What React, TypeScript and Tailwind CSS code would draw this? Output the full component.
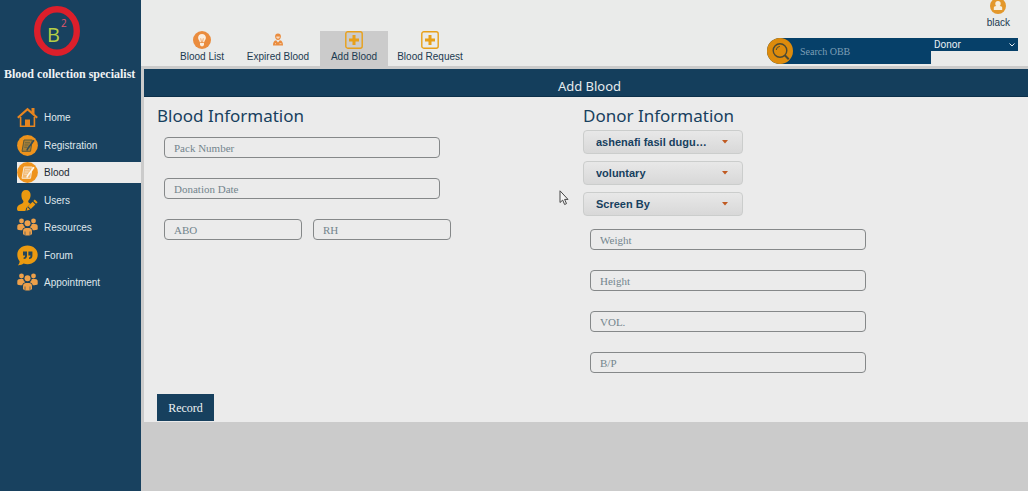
import React from "react";

type IconProps = { className?: string };

const HomeIcon = () => (
  <svg viewBox="0 0 21 21" className="size-[21px]" fill="none" stroke="#e8851f">
    <path d="M0.8 10.8 10.5 2.2l9.7 8.6" strokeWidth="2.2" />
    <path d="M14.5 1h3v6.600l-3-2.600z" fill="#e8851f" stroke="none" />
    <path d="M3.6 10v9.2h13.8V10" strokeWidth="1.6" />
    <path d="M8 12.500h5v7H8z" fill="#e8851f" stroke="none" />
  </svg>
);

const NoteIcon = ({ dark }: { dark?: boolean }) => (
  <svg viewBox="0 0 21 21" className="size-[21px]">
    <circle cx="10.5" cy="10.5" r="10.4" fill="#ee931c" />
    <g fill="none" stroke={dark ? "#5a5a3c" : "#f6e6cf"} strokeWidth="1">
      <path d="M7 5h8.300L13.500 16.300H5z" fill={dark ? "#a98038" : "#f3b970"} />
      <path d="M8 7.800h5M7.600 10h4M7.200 12.200h3" strokeWidth=".8" />
      <path d="M17 5.200 11 13.200l-1.200 2.300" strokeWidth="1.600" stroke={dark ? "#344d58" : "#fff8ec"} />
    </g>
  </svg>
);

const UserEditIcon = () => (
  <svg viewBox="0 0 21 21" className="size-[21px]" fill="#eb9a10">
    <path d="M9 0c3 0 4.600 2.100 4.600 5 0 2.600-1 4.300-2.100 5.600-.5.700-.3 1.900.6 2.400l1.400.7-4.200 4.200-.9 3H1.500C.4 20.900 0 20 0 18.800c0-3 1.500-4 4.200-4.900 2.200-.8 2.700-2.200 1.900-3.400C5 9.200 4.400 7.500 4.400 5 4.400 2.100 6 0 9 0z" />
    <path d="m17.800 9.600 2.800 2.700-1.500 1.500-2.800-2.700zM15.600 11.800l2.800 2.700-4.600 4.500-2.800-2.700zM10.400 17l2.600 2.500-3.500 1.200z" />
  </svg>
);

const GroupIcon = () => (
  <svg viewBox="0 0 21 21" className="size-[21px]" fill="#eda04a">
    <circle cx="4.500" cy="4" r="2.400" />
    <circle cx="16.500" cy="4" r="2.400" />
    <circle cx="10.500" cy="6.200" r="3" />
    <path d="M0.300 12V9.200C.3 7.700 1.500 7 3 7h3.200c.3 1.500 1 2.500 2 3.200-1.600.4-2.600 1.300-2.900 3-2.300 0-5-.1-5-1.200zM20.700 12V9.200c0-1.500-1.200-2.200-2.700-2.200h-3.200c-.3 1.500-1 2.500-2 3.200 1.600.4 2.600 1.300 2.900 3 2.300 0 5-.1 5-1.200z" />
    <path d="M6 17v-2.800c0-2 1.300-3.200 3-3.200h3c1.700 0 3 1.200 3 3.200V17c-.8 1-2.500 1.500-4.500 1.500S6.800 18 6 17z" />
    <path d="M8 14.500V18M13 14.500V18" stroke="#18415f" strokeWidth=".6" />
  </svg>
);

const QuoteIcon = () => (
  <svg viewBox="0 0 21 21" className="size-[21px]">
    <path d="M10.500 .6C16.400.6 20.700 4.600 20.700 9.800s-4.300 9.400-10.200 9.400c-1.400 0-2.700-.2-3.900-.7-1.600 1.200-3.600 1.900-5.800 1.700 1.300-1 1.900-2.300 1.800-4C1.100 14.500.3 12.300.3 9.800.3 4.600 4.600.6 10.500.6z" fill="#eb9a10" />
    <path d="M6 6.500h4v4.200c0 2-1.200 3.300-3.400 3.400v-1.500c1-.2 1.500-.8 1.500-2H6zM11.400 6.500h4v4.200c0 2-1.200 3.300-3.400 3.400v-1.500c1-.2 1.500-.8 1.500-2h-2.100z" fill="#24455a" />
  </svg>
);

const BulbIcon = () => (
  <svg viewBox="0 0 18 18" className="size-[18px]">
    <circle cx="9" cy="9" r="9" fill="#ea8c3e" />
    <path d="M9 3c2.300 0 3.900 1.600 3.900 3.700 0 1.800-1.400 2.800-1.700 4.600H6.800C6.500 9.500 5.100 8.500 5.100 6.700 5.100 4.600 6.700 3 9 3zM7 12h4v2l-1 1.200H8L7 14z" fill="#fbeee0" />
    <path d="m7.700 7.300.8 4h1l.8-4" fill="none" stroke="#ea8c3e" strokeWidth=".7" />
  </svg>
);

const PersonIcon = () => (
  <svg viewBox="0 0 18 18" className="size-[18px]">
    <path d="M9 2.500c2 0 2.900 1.200 2.900 3.100S10.700 9 9 9 6.100 7.500 6.100 5.600 7 2.500 9 2.500z" fill="#ea8c3e" />
    <path d="M7.200 5.600h3.600c0 1.300-.7 2.200-1.800 2.200s-1.800-.9-1.800-2.200z" fill="#f7d9bf" />
    <path d="M4 14.500c0-3 .8-4.700 3.100-5.200L9 11.500l1.900-2.200c2.300.5 3.100 2.200 3.100 5.200z" fill="#ea8c3e" />
    <path d="M6.500 12.200v1M10.500 12.700h2" stroke="#fbeee0" strokeWidth=".7" />
  </svg>
);

const PlusIcon = () => (
  <svg viewBox="0 0 18 18" className="size-[18px]" fill="none" stroke="#e8a019">
    <rect x=".8" y=".8" width="16.400" height="16.400" rx="2" strokeWidth="1.400" />
    <path d="M9 4v10M4 9h10" strokeWidth="3" />
  </svg>
);

const AccountIcon = () => (
  <svg viewBox="0 0 16 16" className="size-4">
    <circle cx="8" cy="8" r="8" fill="#e3982c" />
    <circle cx="8" cy="5.800" r="2.700" fill="#f6efe0" />
    <path d="M3.800 12V9.800c0-1 1-1.800 2.300-1.800h3.800c1.300 0 2.300.8 2.300 1.800V12z" fill="#f6efe0" />
  </svg>
);

const SearchIcon = () => (
  <svg viewBox="0 0 26 26" className="size-[26px]">
    <circle cx="13" cy="13" r="13" fill="#dd8b0c" />
    <g fill="none" stroke="#4b4a35">
      <circle cx="13" cy="12.500" r="6.800" strokeWidth="1.400" />
      <path d="M9.200 12a4 4 0 0 1 3.600-3.600" strokeWidth="1" />
      <path d="m17.800 17.300 3.900 3.900" strokeWidth="2" />
    </g>
  </svg>
);

const Caret = ({ className }: IconProps) => (
  <svg viewBox="0 0 6 4" className={className} fill="#c05a22">
    <path d="M0 0h6L3 3.600z" />
  </svg>
);

const menu = [
  { label: "Home", icon: <HomeIcon /> },
  { label: "Registration", icon: <NoteIcon dark /> },
  { label: "Blood", icon: <NoteIcon />, active: true },
  { label: "Users", icon: <UserEditIcon /> },
  { label: "Resources", icon: <GroupIcon /> },
  { label: "Forum", icon: <QuoteIcon /> },
  { label: "Appointment", icon: <GroupIcon /> },
];

const tabs = [
  { label: "Blood List", icon: <BulbIcon /> },
  { label: "Expired Blood", icon: <PersonIcon /> },
  { label: "Add Blood", icon: <PlusIcon />, active: true },
  { label: "Blood Request", icon: <PlusIcon /> },
];

function Field({ label, className }: { label: string; className: string }) {
  return (
    <input
      type="text"
      aria-label={label}
      placeholder={label}
      className={`${className} block h-[21px] min-w-0 rounded-[4px] border border-[#858889] bg-transparent px-[9px] font-['Liberation_Serif',serif] text-[11px] text-[#17405e] placeholder:text-[#73858d]`}
    />
  );
}

function Picker({ label, value }: { label: string; value: string }) {
  return (
    <div className="relative w-40">
      <select
        aria-label={label}
        className="block h-6 w-full appearance-none rounded-[4px] border border-[#cbcdcc] bg-linear-to-b from-[#e8e8e8] to-[#d8d8d8] pr-6 pl-3 text-[11px] font-bold text-[#17405e]"
      >
        <option>{value}</option>
      </select>
      <Caret className="pointer-events-none absolute top-[10px] right-[15px] h-1 w-1.5" />
    </div>
  );
}

export default function App() {
  return (
    <div className="flex min-h-screen bg-[#cbcbcb] font-['Liberation_Sans',Arial,sans-serif]">
      <aside className="w-[141px] shrink-0 bg-[#18415f]">
        <svg viewBox="0 0 48 52" className="mt-[5px] ml-[33px] h-[52px] w-12">
          <ellipse cx="24" cy="26" rx="19.800" ry="21.800" fill="none" stroke="#dc1f2b" strokeWidth="6.400" />
          <text x="14" y="37" fontFamily="Open Sans, sans-serif" fontSize="20" fill="#b5cf45">
            B
          </text>
          <text x="28" y="22" fontFamily="Open Sans, sans-serif" fontSize="10" fill="#e2576b">
            2
          </text>
        </svg>
        <h1 className="mt-[9px] pl-1 font-['Liberation_Serif',serif] text-[12px] leading-4 font-bold whitespace-nowrap text-[#f0f3f5]">
          Blood collection specialist
        </h1>
        <nav className="mt-[25px] flex h-[186px] flex-col justify-between pl-[17px]">
          {menu.map((m) => (
            <a
              key={m.label}
              href="#"
              className={`flex h-[21px] items-center gap-1.5 text-[10px] ${m.active ? "bg-[#ebebeb] text-[#1d2a33]" : "text-[#dfe7ec]"}`}
            >
              {m.icon}
              {m.label}
            </a>
          ))}
        </nav>
      </aside>

      <div className="flex min-w-0 flex-1 flex-col">
        <header className="flex h-[66px] justify-between bg-[#eaebea] text-[10px] text-[#1c3a50]">
          <nav className="flex items-end gap-2 pl-[27px]">
            {tabs.map((t) => (
              <a
                key={t.label}
                href="#"
                className={`flex h-[35px] w-[68px] flex-col items-center leading-4 whitespace-nowrap ${t.active ? "bg-[#cbcbcb]" : ""}`}
              >
                {t.icon}
                {t.label}
              </a>
            ))}
          </nav>
          <div className="flex flex-col items-end pr-2.5">
            <a href="#" className="-mt-0.5 mr-2 flex flex-col items-center leading-[18px]">
              <AccountIcon />
              black
            </a>
            <form className="mt-1.5 flex w-[251px] items-start" onSubmit={(e) => e.preventDefault()}>
              <div className="flex h-[26px] flex-1 items-center rounded-l-full bg-[#064069]">
                <button type="submit" aria-label="Search">
                  <SearchIcon />
                </button>
                <input
                  type="text"
                  aria-label="Search OBB"
                  placeholder="Search OBB"
                  className="ml-[7px] w-full min-w-0 bg-transparent font-['Liberation_Serif',serif] text-[10px] text-white placeholder:text-[#7d9fb6]"
                />
              </div>
              <div className="relative w-[87px]">
                <select
                  aria-label="Search in"
                  className="block h-[13px] w-full appearance-none bg-[#064069] pl-[3px] font-['Roboto',sans-serif] text-[10px] leading-[13px] text-[#e6eef3]"
                >
                  <option>Donor</option>
                </select>
                <svg viewBox="0 0 6 4" className="pointer-events-none absolute top-[5px] right-[3px] h-1 w-1.5" fill="none" stroke="#e6eef3">
                  <path d="m.5.5 2.500 2.500L5.500.5" />
                </svg>
              </div>
            </form>
          </div>
        </header>

        <main className="mt-[3px] ml-[3px] bg-[#ebebeb] text-[#17405e]">
          <h2 className="h-7 border-b border-[#0c304a] bg-[#143e5c] pt-[7px] pl-[7px] text-center font-['Noto_Sans',sans-serif] text-[13px] leading-5 text-[#e6ebee]">
            Add Blood
          </h2>
          <form className="pl-[13px]" onSubmit={(e) => e.preventDefault()}>
            <div className="grid grid-cols-[426fr_445fr] pt-2">
              <section>
                <h3 className="font-['Noto_Sans',sans-serif] text-[17px] leading-[22px]">Blood Information</h3>
                <div className="mt-2.5 flex flex-col gap-5 pl-[7px]">
                  <Field label="Pack Number" className="w-[276px]" />
                  <Field label="Donation Date" className="w-[276px]" />
                  <div className="flex gap-[11px]">
                    <Field label="ABO" className="w-[138px]" />
                    <Field label="RH" className="w-[138px]" />
                  </div>
                </div>
              </section>
              <section>
                <h3 className="font-['Noto_Sans',sans-serif] text-[17px] leading-[22px]">Donor Information</h3>
                <div className="mt-[3px] flex flex-col gap-[7px]">
                  <Picker label="Donor" value="ashenafi fasil dugu…" />
                  <Picker label="Donation type" value="voluntary" />
                  <Picker label="Screened by" value="Screen By" />
                </div>
                <div className="mt-[13px] flex flex-col gap-5 pl-[7px]">
                  <Field label="Weight" className="w-[276px]" />
                  <Field label="Height" className="w-[276px]" />
                  <Field label="VOL." className="w-[276px]" />
                  <Field label="B/P" className="w-[276px]" />
                </div>
              </section>
            </div>
            <button
              type="submit"
              className="mt-[21px] mb-px block h-[27px] w-[57px] bg-[#17405e] font-['Liberation_Serif',serif] text-[12px] text-[#eef2f4]"
            >
              Record
            </button>
          </form>
        </main>
      </div>

      <svg viewBox="0 0 10 16" className="pointer-events-none absolute top-[190px] left-[559px] h-4 w-2.5" fill="#f4f4f4" stroke="#454545">
        <path d="M1 .8v11.700l2.700-2.400 1.900 4.400 1.900-.9-1.900-4.200H9z" />
      </svg>
    </div>
  );
}
